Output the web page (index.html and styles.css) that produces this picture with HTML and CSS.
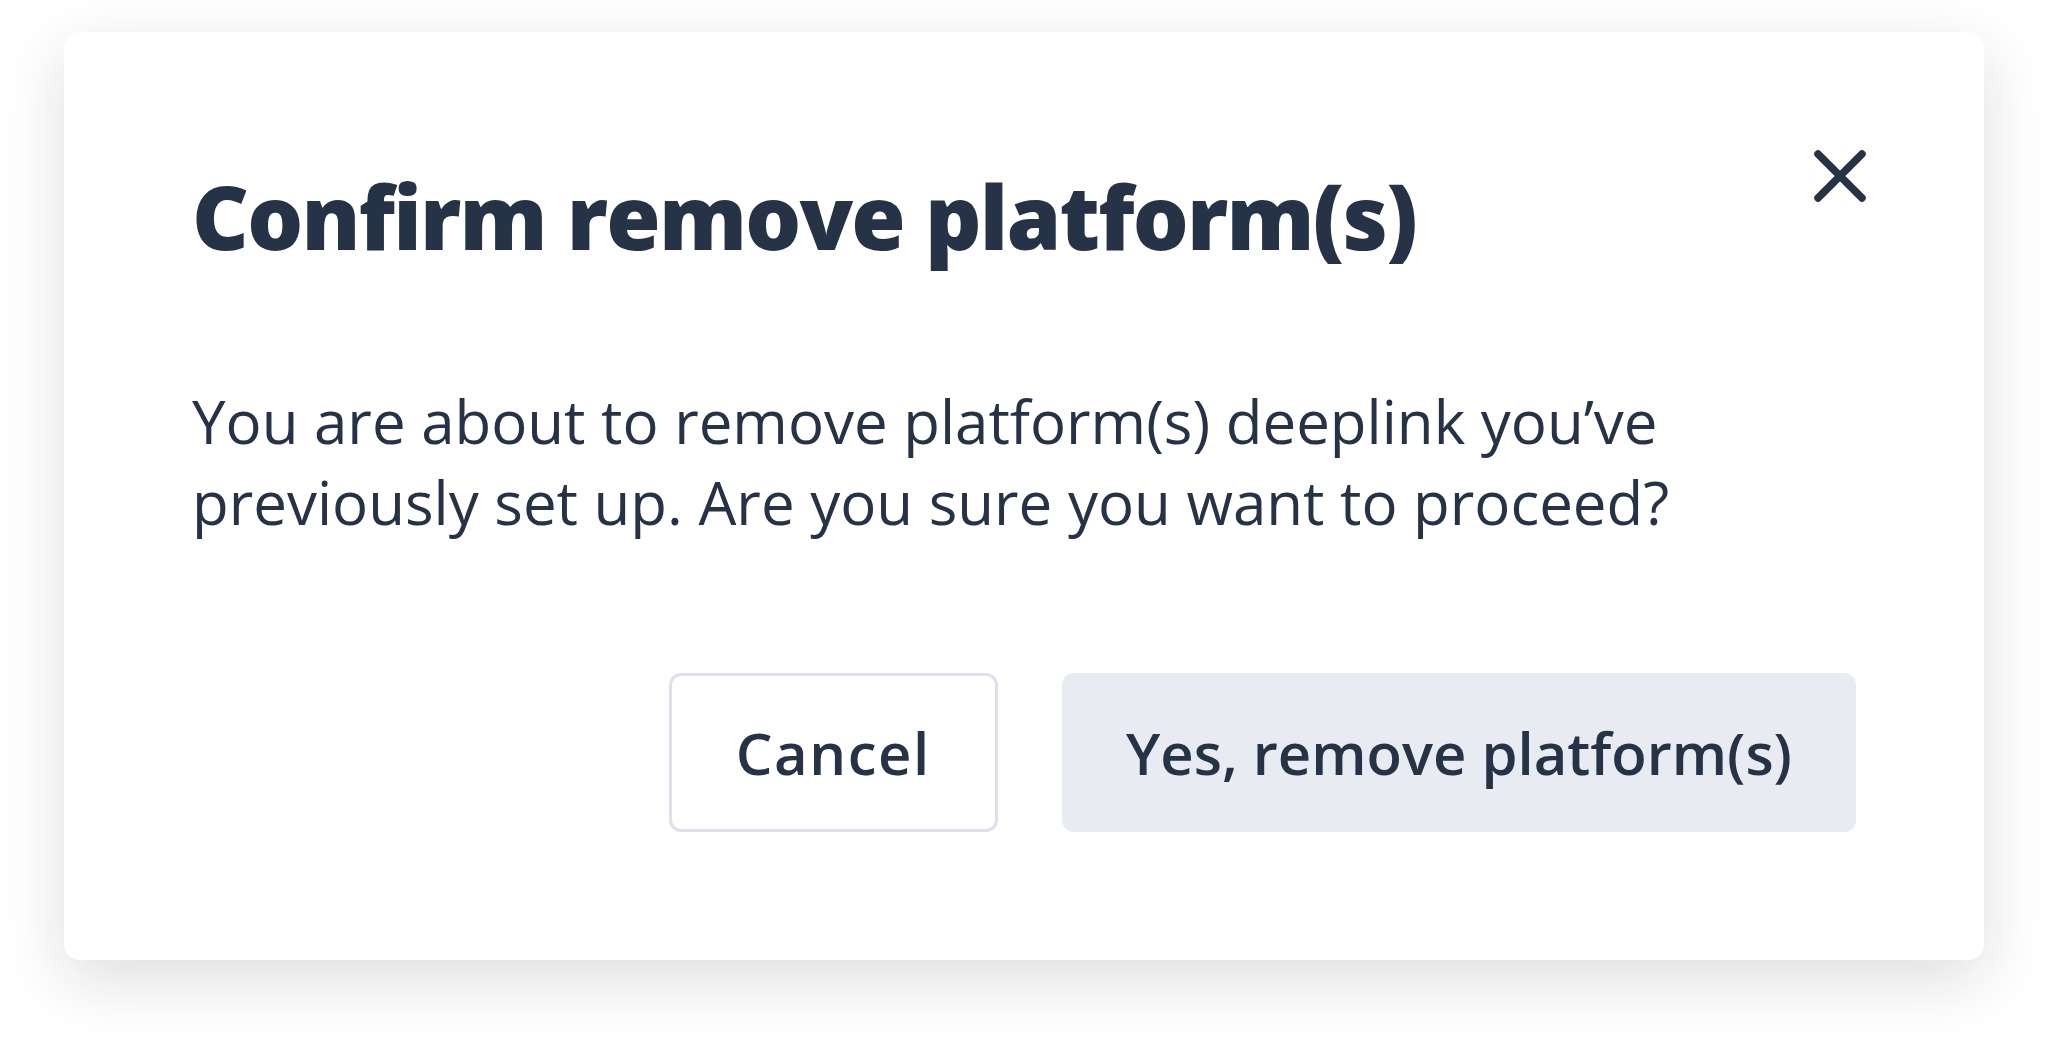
FILE: index.html
```html
<!DOCTYPE html>
<html lang="en">
<head>
<meta charset="utf-8">
<title>Confirm remove platform(s)</title>
<link rel="stylesheet" href="styles.css">
</head>
<body>
<div class="page">
  <div class="dialog" role="dialog" aria-labelledby="dlg-title">
    <button class="close" aria-label="Close">
      <svg viewBox="0 0 54 54" width="54" height="54" aria-hidden="true">
        <path d="M5 5 L49 49 M49 5 L5 49" stroke="#263246" stroke-width="7.5" stroke-linecap="round" fill="none"/>
      </svg>
    </button>
    <h1 class="title" id="dlg-title">Confirm remove platform(s)</h1>
    <p class="message">You are about to remove platform(s) deeplink you’ve previously set up. Are you sure you want to proceed?</p>
    <div class="actions">
      <button class="btn btn-outline">Cancel</button>
      <button class="btn btn-filled">Yes, remove platform(s)</button>
    </div>
  </div>
</div>
</body>
</html>
```
FILE: styles.css
```css
html, body {
  margin: 0;
  padding: 0;
  background: #ffffff;
}
body {
  font-family: "Open Sans", "Lato", sans-serif;
  color: #263246;
}
.page {
  box-sizing: border-box;
  min-height: 1056px;
  padding: 32px 64px 96px 64px;
}
.dialog {
  position: relative;
  box-sizing: border-box;
  width: 1920px;
  height: 928px;
  background: #ffffff;
  border-radius: 16px;
  box-shadow: 0 20px 64px rgba(20, 24, 32, 0.14);
  padding: 131px 128px 128px 128px;
  display: flex;
  flex-direction: column;
}
.close {
  position: absolute;
  top: 117px;
  right: 117px;
  width: 54px;
  height: 54px;
  padding: 0;
  border: 0;
  background: transparent;
  display: flex;
}
.title {
  margin: 0;
  font-size: 88px;
  line-height: 106px;
  font-weight: 800;
  letter-spacing: -1.8px;
  color: #263246;
}
.message {
  margin: 112px 0 0 0;
  font-size: 60px;
  line-height: 81px;
  font-weight: 400;
  color: #263246;
  max-width: 1600px;
}
.actions {
  margin-top: auto;
  display: flex;
  justify-content: flex-end;
  gap: 64px;
}
.btn {
  height: 159px;
  box-sizing: border-box;
  font-family: "Open Sans", "Lato", sans-serif;
  font-size: 58px;
  font-weight: 600;
  color: #263246;
  border-radius: 12px;
  padding: 0 64px;
  cursor: pointer;
}
.btn-outline {
  background: #ffffff;
  border: 3px solid #dde1ec;
  letter-spacing: 1.6px;
}
.btn-filled {
  background: #e8ebf2;
  border: 0;
}
```
